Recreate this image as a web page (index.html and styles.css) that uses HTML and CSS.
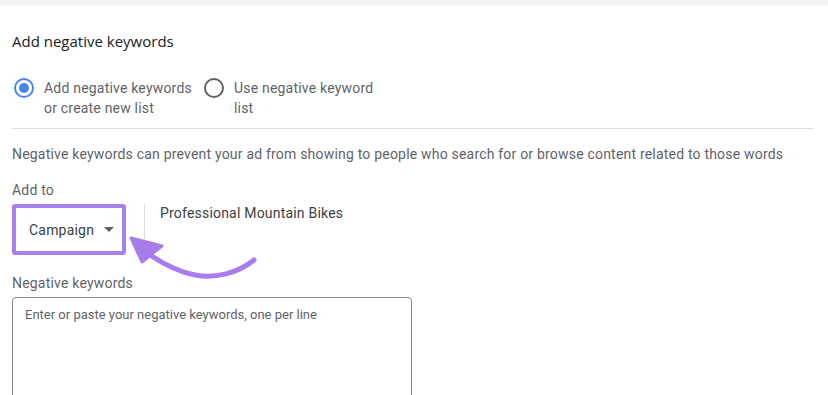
FILE: index.html
```html
<!DOCTYPE html>
<html>
<head>
<meta charset="utf-8">
<link rel="stylesheet" href="styles.css">
</head>
<body>
<div class="topbar"></div>
<div class="panel">
  <h2 class="title">Add negative keywords</h2>
  <div class="radios">
    <label class="radio first">
      <span class="dot checked"><span class="inner"></span></span>
      <span class="rtext">Add negative keywords<br>or create new list</span>
    </label>
    <label class="radio">
      <span class="dot"></span>
      <span class="rtext">Use negative keyword<br>list</span>
    </label>
  </div>
  <div class="divider"></div>
  <p class="desc">Negative keywords can prevent your ad from showing to people who search for or browse content related to those words</p>
  <div class="addto">Add to</div>
  <div class="selrow">
    <div class="select">Campaign <span class="caret"></span></div>
    <div class="vline"></div>
    <div class="campname">Professional Mountain Bikes</div>
    <svg class="arrow" width="140" height="60" viewBox="0 0 140 60">
      <path d="M134 33 C 118 46, 95 52, 75 48 C 58 45, 42 36, 30 28" fill="none" stroke="#a87ced" stroke-width="5" stroke-linecap="round"/>
      <polygon points="11,11 22,35 42,19" fill="#a87ced" stroke="#a87ced" stroke-width="3" stroke-linejoin="round"/>
    </svg>
  </div>
  <div class="nklabel">Negative keywords</div>
  <div class="textarea">Enter or paste your negative keywords, one per line</div>
</div>
</body>
</html>
```
FILE: styles.css
```css
html, body {
  margin: 0;
  padding: 0;
  background: #ffffff;
  font-family: Roboto, "Liberation Sans", Arial, sans-serif;
  color: #3c4043;
}
.topbar {
  height: 4px;
  background: #f3f3f3;
  box-shadow: 0 1px 2px rgba(0,0,0,0.06);
}
.panel {
  padding: 0 15px 0 12px;
  position: relative;
}
.title {
  margin: 25px 0 0 0;
  font-family: "Open Sans", Roboto, sans-serif;
  font-weight: 400;
  font-size: 15px;
  line-height: 24px;
  color: #202124;
}
.radios {
  display: flex;
  gap: 12px;
  margin-top: 25px;
}
.radio {
  display: flex;
  align-items: flex-start;
  gap: 10px;
}
.radio.first {
  margin-left: 2px;
}
.dot {
  border: 2px solid #5f6368;
  border-radius: 50%;
  box-sizing: border-box;
  margin-top: 0px;
  width: 20px;
  height: 20px;
  display: flex;
  align-items: center;
  justify-content: center;
  flex: none;
}
.dot.checked {
  border-color: #4a86e8;
}
.inner {
  width: 10px;
  height: 10px;
  border-radius: 50%;
  background: #4a86e8;
}
.rtext {
  font-size: 14px;
  line-height: 20px;
  color: #5f6368;
  letter-spacing: 0.2px;
}
.divider {
  height: 1px;
  background: #dadce0;
  margin-top: 10px;
  width: 801px;
}
.desc {
  margin: 15px 0 0 0;
  font-size: 14px;
  line-height: 20px;
  color: #5f6368;
  letter-spacing: 0.2px;
}
.addto {
  margin-top: 16px;
  font-size: 14px;
  line-height: 20px;
  color: #5f6368;
  letter-spacing: 0.2px;
}
.selrow {
  display: flex;
  align-items: flex-start;
  margin-top: 4px;
  position: relative;
}
.select {
  width: 114px;
  height: 51px;
  box-sizing: border-box;
  border: 4px solid #a97eef;
  border-radius: 3px;
  display: flex;
  align-items: center;
  padding-left: 13px;
  font-size: 14px;
  color: #3c4043;
  gap: 8px;
  letter-spacing: 0.2px;
}
.caret {
  width: 0;
  height: 0;
  border-left: 5px solid transparent;
  border-right: 5px solid transparent;
  border-top: 5px solid #5f6368;
  margin-left: 2px;
}
.vline {
  width: 1px;
  height: 40px;
  background: #dadce0;
  margin-left: 18px;
}
.campname {
  margin-left: 15px;
  font-size: 14px;
  line-height: 20px;
  margin-top: -1px;
  color: #3c4043;
  letter-spacing: 0.2px;
}
.arrow {
  position: absolute;
  left: 108px;
  top: 23px;
}
.nklabel {
  margin-top: 18px;
  font-size: 14px;
  line-height: 20px;
  color: #5f6368;
  letter-spacing: 0.2px;
}
.textarea {
  margin-top: 4px;
  width: 400px;
  height: 120px;
  box-sizing: border-box;
  border: 1px solid #80868b;
  border-radius: 4px;
  padding: 8px 12px;
  font-size: 13px;
  line-height: 18px;
  color: #5f6368;
}
```
